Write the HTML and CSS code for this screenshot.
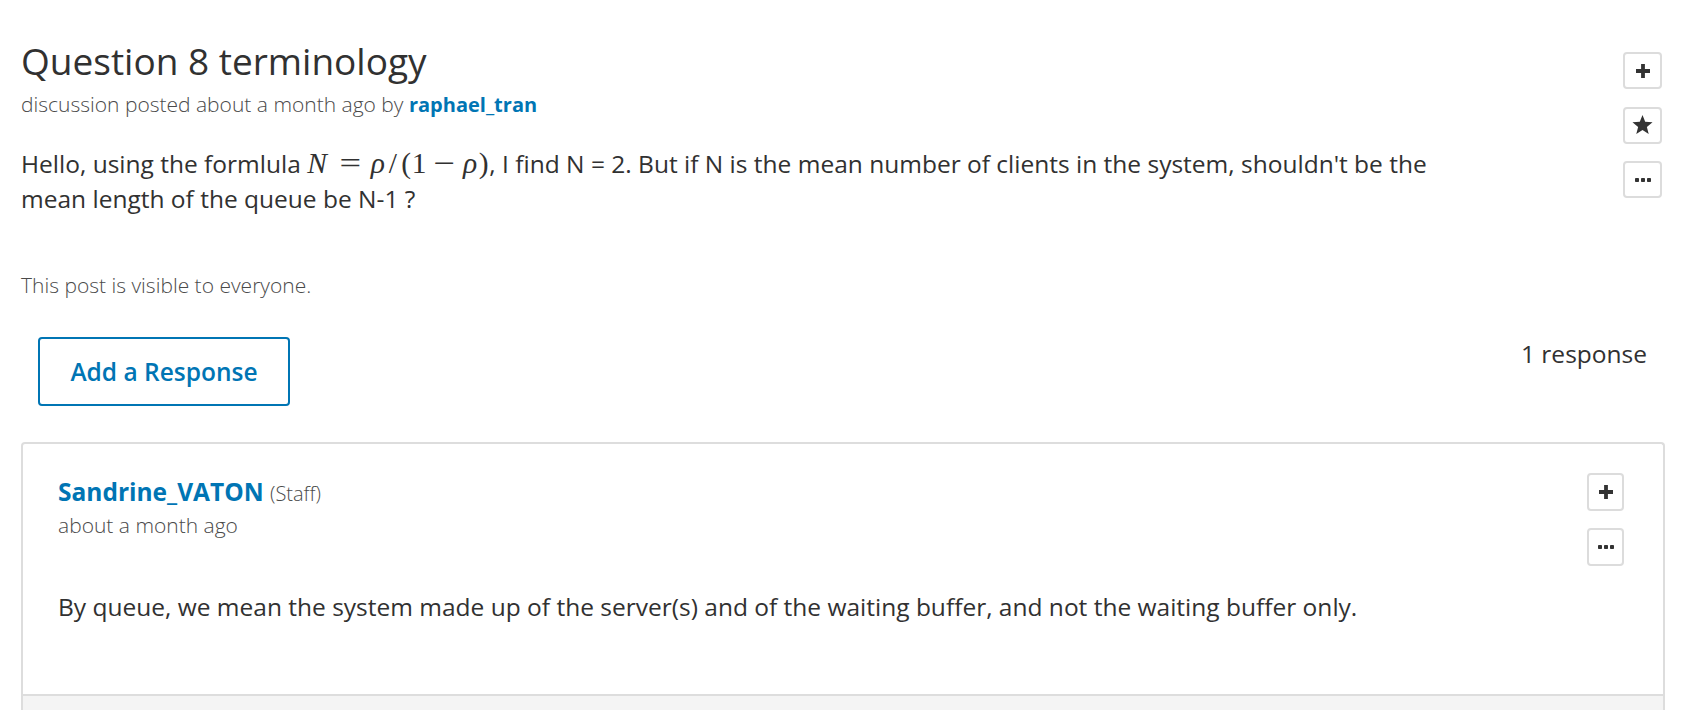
FILE: index.html
```html
<!DOCTYPE html>
<html lang="en">
<head>
<meta charset="utf-8">
<title>Question 8 terminology</title>
<link rel="stylesheet" href="styles.css">
</head>
<body>
<div class="page">
  <article class="post">
    <div class="post-main">
      <h1 class="post-title">Question 8 terminology</h1>
      <p class="post-meta">discussion posted about a month ago by <a class="author" href="#">raphael_tran</a></p>
      <div class="post-body">Hello, using the formlula <span class="math"><span class="m m-n">N</span><span class="m m-rel"><span class="m-wide">=</span></span><span class="m m-rho">ρ</span><span class="m m-sl">/</span><span class="m m-par">(</span><span class="m m-one">1</span><span class="m m-bin"><span class="m-wide">−</span></span><span class="m m-rho">ρ</span><span class="m m-par">)</span></span>, I find N = 2. But if N is the mean number of clients in the system, shouldn't be the mean length of the queue be N-1 ?</div>
      <p class="visibility">This post is visible to everyone.</p>
    </div>
    <div class="post-actions">
      <button class="action-btn" aria-label="Follow"><svg class="ic-plus" viewBox="0 0 16 16"><path d="M6.1 1h3.8v5.1H15v3.8H9.9V15H6.1V9.9H1V6.1h5.1z"/></svg></button>
      <button class="action-btn" aria-label="Star"><svg class="ic-star" viewBox="0 0 24 24"><polygon points="12,1 14.82,8.12 22.46,8.6 16.56,13.48 18.47,20.9 12,16.8 5.53,20.9 7.44,13.48 1.54,8.6 9.18,8.12"/></svg></button>
      <button class="action-btn" aria-label="More"><svg class="ic-dots" viewBox="0 0 16 4"><rect x="0" y="0" width="4" height="4" rx="0.8"/><rect x="6" y="0" width="4" height="4" rx="0.8"/><rect x="12" y="0" width="4" height="4" rx="0.8"/></svg></button>
    </div>
  </article>

  <div class="response-bar">
    <button class="add-response">Add a Response</button>
    <span class="response-count">1 response</span>
  </div>

  <section class="response-card">
    <div class="response-inner">
      <div class="response-main">
        <div class="resp-head"><a class="resp-author" href="#">Sandrine_VATON</a> <span class="role">(Staff)</span></div>
        <div class="resp-time">about a month ago</div>
        <p class="resp-body">By queue, we mean the system made up of the server(s) and of the waiting buffer, and not the waiting buffer only.</p>
      </div>
      <div class="resp-actions">
        <button class="action-btn small" aria-label="Follow"><svg class="ic-plus" viewBox="0 0 16 16"><path d="M6.1 1h3.8v5.1H15v3.8H9.9V15H6.1V9.9H1V6.1h5.1z"/></svg></button>
        <button class="action-btn small" aria-label="More"><svg class="ic-dots" viewBox="0 0 16 4"><rect x="0" y="0" width="4" height="4" rx="0.8"/><rect x="6" y="0" width="4" height="4" rx="0.8"/><rect x="12" y="0" width="4" height="4" rx="0.8"/></svg></button>
      </div>
    </div>
    <div class="resp-footer"></div>
  </section>
</div>
</body>
</html>
```

FILE: styles.css
```css
html, body {
  margin: 0;
  background: #fff;
}

body {
  font-family: "Open Sans", "Liberation Sans", sans-serif;
  color: #313131;
}

.page {
  padding: 36px 23px 0 21px;
}

.post {
  display: flex;
  align-items: flex-start;
}

.post-main {
  flex: 1;
  min-width: 0;
}

.post-title {
  margin: 0;
  font-size: 37px;
  line-height: 49px;
  font-weight: 400;
  color: #313131;
}

.post-meta {
  margin: 6px 0 0;
  font-size: 21px;
  line-height: 27px;
  font-weight: 300;
  color: #4a4a4a;
}

.author,
.resp-author {
  color: #0075b4;
  font-weight: 700;
  text-decoration: none;
}

.author {
  font-size: 20px;
}

.post-body {
  margin-top: 28px;
  max-width: 1450px;
  font-size: 24.5px;
  line-height: 35px;
  color: #313131;
}

.math {
  font-family: "Liberation Serif", "DejaVu Serif", serif;
  font-size: 29.5px;
  line-height: 1;
  white-space: nowrap;
}

.m {
  display: inline-block;
  text-align: center;
}

.m-n {
  width: 0.8em;
  font-style: italic;
  text-align: left;
}

.m-rho {
  width: 0.52em;
  font-style: italic;
}

.m-rel {
  width: 0.78em;
  margin: 0 0.28em;
}

.m-bin {
  width: 0.78em;
  margin: 0 0.22em;
}

.m-wide {
  display: inline-block;
  transform: scaleX(1.3);
}

.m-sl {
  width: 0.5em;
}

.m-par {
  width: 0.39em;
}

.m-one {
  width: 0.5em;
}

.visibility {
  margin: 56px 0 0;
  font-size: 21px;
  line-height: 27px;
  font-weight: 300;
  color: #4a4a4a;
}

.post-actions {
  display: flex;
  flex-direction: column;
  gap: 17.5px;
  margin-top: 16px;
  margin-right: 3px;
}

.action-btn {
  width: 39px;
  height: 37px;
  padding: 0;
  border: 2px solid #dcdcdc;
  border-radius: 4px;
  background: #fff;
  display: flex;
  align-items: center;
  justify-content: center;
  cursor: pointer;
}

.action-btn.small {
  width: 37px;
  height: 38px;
}

.action-btn svg {
  fill: #333;
  display: block;
}

.ic-plus {
  width: 16px;
  height: 16px;
}

.ic-star {
  width: 23px;
  height: 23px;
}

.ic-dots {
  width: 16px;
  height: 4px;
}

.response-bar {
  display: flex;
  justify-content: space-between;
  align-items: flex-start;
  margin-top: 38px;
}

.add-response {
  margin-left: 17px;
  width: 252px;
  height: 69px;
  padding: 0;
  border: 2px solid #0075b4;
  border-radius: 4px;
  background: #fff;
  color: #0075b4;
  font-family: "Open Sans", "Liberation Sans", sans-serif;
  font-size: 24.5px;
  font-weight: 600;
  cursor: pointer;
}

.response-count {
  margin-right: 18px;
  font-size: 24.5px;
  line-height: 33px;
  color: #313131;
}

.response-card {
  margin-top: 36px;
  border: 2px solid #dddddd;
  border-bottom: none;
  border-radius: 4px 4px 0 0;
}

.response-inner {
  display: flex;
  align-items: flex-start;
  padding: 29px 39px 0 35px;
}

.response-main {
  flex: 1;
  min-width: 0;
  padding-bottom: 70px;
}

.resp-head {
  font-size: 24.5px;
  line-height: 37px;
}

.role {
  font-size: 20px;
  font-weight: 300;
  color: #4a4a4a;
}

.resp-time {
  font-size: 21px;
  line-height: 27px;
  font-weight: 300;
  color: #4a4a4a;
}

.resp-body {
  margin: 50px 0 0;
  font-size: 24.5px;
  line-height: 35px;
  color: #313131;
}

.resp-actions {
  display: flex;
  flex-direction: column;
  gap: 17px;
}

.resp-footer {
  height: 40px;
  border-top: 2px solid #dddddd;
  background: #f4f4f4;
}
```
